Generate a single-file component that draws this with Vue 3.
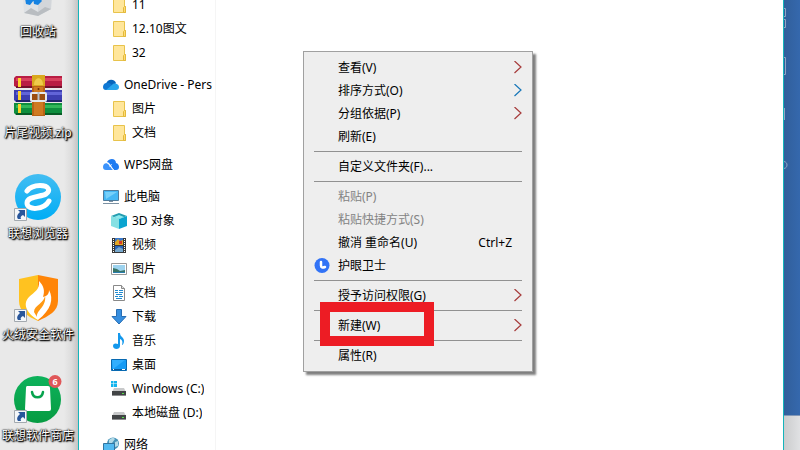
<template>
  <div class="screen">
    <aside class="desktop">
      <button v-for="item in shortcuts" :key="item.label" type="button" class="shortcut">
        <svg class="shortcut__icon" viewBox="0 0 48 48" aria-hidden="true">
          <g v-if="item.icon === 'bin'">
            <path d="M8 8L24 13L39 8L37 38L24 45L10 42z" fill="#dfe2e5" />
            <path d="M24 13L39 8L37 38L24 45z" fill="#d3d6da" />
            <path d="M10 42L17 37L24 41L31 36L37 38L24 45z" fill="#b9bdc1" />
            <path d="M11 27l5-3 4 5-4 5-4-1zM19 27l6-1 3 4-4 4-4-1z" fill="#1683e2" />
          </g>
          <g v-else-if="item.icon === 'zip'" transform="translate(0 2)">
            <path d="M2 2h46v12H4L0 12V4z" fill="#b91d43" />
            <path d="M2 4h46v3H2z" fill="#d8405e" />
            <path d="M2 12h46v2H2z" fill="#74102c" />
            <path d="M0 16h48v12H2l-2-2z" fill="#3d3eb1" />
            <path d="M2 18h46v3H2z" fill="#6264d8" />
            <path d="M2 26h46v2H2z" fill="#22236e" />
            <path d="M0 29h48v12H2l-2-2z" fill="#0e8e3e" />
            <path d="M2 31h46v3H2z" fill="#32b75a" />
            <path d="M2 39h46v2H2z" fill="#075c26" />
            <path d="M4 4h3v9H4zM4 17h3v9H4zM4 30h3v9H4z" fill="#ffd32c" />
            <path d="M18 1h13v41H18z" fill="#b96316" />
            <path d="M18 1h13v11H18z" fill="#d9a91e" />
            <path d="M20 11c0-9 9-9 9 0z" fill="#efcb4c" />
            <path d="M20 13h9v28h-9z" fill="#cf7a22" />
            <rect x="17" y="19" width="15" height="8" rx="1" fill="#9c4e10" stroke="#e6e8eb" stroke-width="2" />
            <path d="M24.500 18v8" stroke="#b9c2ca" stroke-width="2" />
            <circle cx="24.500" cy="15" r="1" fill="#653006" />
          </g>
          <g v-else-if="item.icon === 'browser'">
            <defs>
              <linearGradient id="sky" x2="0" y2="1">
                <stop stop-color="#43bdf2" /><stop offset="1" stop-color="#00adf5" />
              </linearGradient>
            </defs>
            <circle cx="24" cy="24" r="23" fill="url(#sky)" />
            <path d="M13 18C16 14 20 12.500 26 12.500C35 12.500 37 18 32 21C27 24 13 23 13 30C13 38 30 37 35 28" fill="none" stroke="#fff" stroke-width="5" stroke-linecap="round" />
          </g>
          <g v-else-if="item.icon === 'fire'">
            <path d="M5 5L24 1V47C13 42 5 37 5 27z" fill="#ffc220" />
            <path d="M24 1L44 5V27C44 37 35 42 24 47z" fill="#ff8508" />
            <path d="M25 7C30 12 31 17 29 23C33 22 35 20 35 16C40 25 37 36 24 46C11 38 9 29 15 23C20 18 26 16 25 7z" fill="#fff" />
            <path d="M31 21C31 29 20 31 20 38L23 43C22 36 33 33 31 21z" fill="#ff9914" />
          </g>
          <g v-else>
            <defs>
              <linearGradient id="leaf" x2="0" y2="1">
                <stop stop-color="#0db25b" /><stop offset="1" stop-color="#069b42" />
              </linearGradient>
            </defs>
            <circle cx="23.500" cy="24.500" r="23.500" fill="url(#leaf)" />
            <path d="M13 11h21a2 2 0 0 1 2 2l1 21a2 2 0 0 1-2 2H13a2 2 0 0 1-2-2l1-21a2 2 0 0 1 1-2z" fill="#fff" />
            <path d="M18 17c1 7 10 7 11 0" fill="none" stroke="#07a34d" stroke-width="2.500" stroke-linecap="round" />
            <circle cx="41" cy="6.500" r="6.500" fill="#e05759" />
          </g>
          <g v-if="item.linked" transform="translate(0 35)">
            <path d="M.5.5h12v12H.5z" fill="#f4f7fa" stroke="#a3a9af" />
            <path d="M4 2h7v7L9 7C7 8 6 9 7 11H4C2 8 4 6 6 4z" fill="#28569b" />
          </g>
        </svg>
        <span v-if="item.badge" class="shortcut__badge">{{ item.badge }}</span>
        <span class="shortcut__label">{{ item.label }}</span>
      </button>
    </aside>

    <section class="explorer">
      <nav class="tree">
        <ul v-for="(group, index) in tree" :key="index" class="tree__group">
          <li v-for="node in group" :key="node.label">
            <button type="button" :class="['node', { 'node--root': node.root }]">
              <svg class="node__icon" viewBox="0 0 16 16" aria-hidden="true">
                <g v-if="node.icon === 'folder'">
                  <path d="M2.500.5h11v9h1v6h-12z" fill="#ffe69b" stroke="#e8c34b" />
                  <path d="M12.500 15.500v-5l1-1h1v6z" fill="#ffdc72" stroke="#e3b93c" />
                </g>
                <g v-else-if="node.icon === 'onedrive'">
                  <path d="M3 7C4 2 11 1 13 6L9 11z" fill="#0864bb" />
                  <path d="M3 13C-1 13-1 7 3 6C6 5 8 7 10 9L5 13z" fill="#0f78d4" />
                  <path d="M3 13L9 8C11 5 16 7 16 10C16 12 15 13 13 13z" fill="#28a5ec" />
                </g>
                <g v-else-if="node.icon === 'wps'">
                  <path d="M4 5C6 1 13 1 13 6C17 7 17 13 13 13H11L6 6z" fill="#1f7cf2" />
                  <path d="M0 10C0 6 4 5 6 8L10 13H3C1 13 0 12 0 10z" fill="#3c93fb" />
                  <path d="M4.500 6C7 6 8 12 11.500 13.500M9 7.500Q7 8 6.500 9.500" fill="none" stroke="#fff" stroke-width=".8" />
                </g>
                <g v-else-if="node.icon === 'pc'">
                  <path d="M.5 1.500h15v10H.5z" fill="#45b7f4" stroke="#507b9b" />
                  <path d="M2 3h12L3 10z" fill="#77d0fa" />
                  <path d="M6 12h4v1H6zM0 14h16v1H0z" fill="#7c91a3" />
                </g>
                <g v-else-if="node.icon === 'cube'">
                  <path d="M0 3L8 0L16 3L8 6z" fill="#249db0" />
                  <path d="M0 3L8 6V16L0 13z" fill="#85e0e3" />
                  <path d="M8 6L16 3V13L8 16z" fill="#0ba4cf" />
                  <path d="M3 4L8 2L13 4L8 6z" fill="#8ce9ee" />
                </g>
                <g v-else-if="node.icon === 'film'">
                  <path d="M1 1h14v15H1z" fill="#383838" />
                  <path d="M4 1h8v7H4z" fill="#3978ca" />
                  <path d="M4 5l3-3 2 2 3-1v5H4z" fill="#e2a725" />
                  <path d="M8 4h3v3H8z" fill="#d63926" />
                  <path d="M4 9h8v6H4z" fill="#2563bc" />
                  <path d="M4 13l4-3 4 2v3H4z" fill="#77a8cd" />
                  <path d="M2.500 2v13M13.500 2v13" stroke="#fff" stroke-dasharray="1 1" />
                </g>
                <g v-else-if="node.icon === 'picture'">
                  <path d="M.5 2.500h15v11H.5z" fill="#fff" stroke="#999" />
                  <path d="M2 4h12v8H2z" fill="#9dd3ef" />
                  <path d="M2 7l4 1 3 2 5-1v3H2z" fill="#387467" />
                  <path d="M2 11h12v1H2z" fill="#297dac" />
                </g>
                <g v-else-if="node.icon === 'document'">
                  <path d="M2.500.5h8l3 3v12h-11z" fill="#fff" stroke="#898989" />
                  <path d="M10.500.5v3h3" fill="#ddd" stroke="#898989" />
                  <path d="M4 5.500h3M8 5.500h4M4 7.500h3M8 7.500h4M5 9.500h6M4 11.500h3M8 11.500h4M5 13.500h6" stroke="#218bd0" />
                </g>
                <path v-else-if="node.icon === 'download'" d="M5.500.5h5v7h4.500L8 15 1 7.500h4.500z" fill="#378fe0" stroke="#286eb4" />
                <g v-else-if="node.icon === 'music'">
                  <path d="M7 0h2c0 4 4 4 4 8 0 2-1 4-2 4 1-4 0-5-2-6v7c0 4-7 4-7 0 0-3 3-3 5-2z" fill="#1498ec" />
                </g>
                <g v-else-if="node.icon === 'screen'">
                  <path d="M.5 2.500h15v11H.5z" fill="#169bf5" stroke="#0869b1" />
                  <path d="M1 3h13L2 12z" fill="#32aefd" />
                  <path d="M1 12h14v1H1z" fill="#075b9f" />
                  <path d="M2 12.500h1M11 12.500h3" stroke="#fff" />
                </g>
                <g v-else-if="node.icon === 'disk' || node.icon === 'windisk'" transform="translate(0 1)">
                  <path v-if="node.icon === 'windisk'" d="M0 -1h2.500v2.500H0zM3 -1h3v2.500H3zM0 2h2.500v3H0zM3 2h3v3H3z" fill="#13b4ed" />
                  <path d="M3 6h10l2 4H1z" fill="#c8c9ca" />
                  <path d="M1 9h14v5H1z" fill="#424446" />
                  <path d="M1 13h14v1H1z" fill="#8d8e8f" />
                  <path d="M11 11h2v1h-2z" fill="#55e247" />
                </g>
                <g v-else>
                  <circle cx="10" cy="6.500" r="6" fill="#4794b9" />
                  <path d="M6 3c3-3 5-2 6-1L9 6 6 7zM12 5l3-1v5l-3 1z" fill="#b3dae7" />
                  <path d="M.5 6.500h11v7H.5z" fill="#52baf1" stroke="#32749f" />
                  <path d="M2 15h8v1H2z" fill="#7590a2" />
                </g>
              </svg>
              <span class="node__label">{{ node.label }}</span>
            </button>
          </li>
        </ul>
      </nav>

      <main class="files">
        <div class="menu" role="menu">
          <template v-for="(entry, index) in menu" :key="index">
            <hr v-if="entry.separator" class="menu__line" />
            <button v-else type="button" role="menuitem" class="menu__item" :disabled="entry.disabled">
              <svg v-if="entry.eye" class="menu__icon" viewBox="0 0 16 16" aria-hidden="true">
                <circle cx="8" cy="7.500" r="7.500" fill="#3273f6" />
                <path d="M7 4v3.500q0 3 4 1.500" fill="none" stroke="#fff" stroke-width="2.500" stroke-linecap="round" />
              </svg>
              <span class="menu__label">{{ entry.label }}</span>
              <span v-if="entry.hint" class="menu__hint">{{ entry.hint }}</span>
              <svg v-if="entry.arrow" class="menu__arrow" viewBox="0 0 8 14" aria-hidden="true">
                <path d="M.5 0L7 6L.5 12" fill="none" :stroke="entry.arrow" stroke-width="1.200" />
              </svg>
            </button>
          </template>
          <div class="marker"></div>
        </div>
      </main>
    </section>

    <aside class="backdrop">
      <svg class="backdrop__marks" viewBox="0 0 16 190" aria-hidden="true">
        <path d="M0 8.500h1.500v8H0M0 19.500h1.500v8H0M0 57.500h1.500v17H0M.5 108v12M0 161.500C4 162 4 168 0 168.500" fill="none" stroke="#91a7c5" />
      </svg>
      <div class="taskbar"></div>
    </aside>
  </div>
</template>

<script setup>
const shortcuts = [
  { label: '回收站', icon: 'bin' },
  { label: '片尾视频.zip', icon: 'zip' },
  { label: '联想浏览器', icon: 'browser', linked: true },
  { label: '火绒安全软件', icon: 'fire', linked: true },
  { label: '联想软件商店', icon: 'store', linked: true, badge: 6 }
];

const tree = [
  [
    { label: '11', icon: 'folder' },
    { label: '12.10图文', icon: 'folder' },
    { label: '32', icon: 'folder' }
  ],
  [
    { label: 'OneDrive - Pers', icon: 'onedrive', root: true },
    { label: '图片', icon: 'folder' },
    { label: '文档', icon: 'folder' }
  ],
  [{ label: 'WPS网盘', icon: 'wps', root: true }],
  [
    { label: '此电脑', icon: 'pc', root: true },
    { label: '3D 对象', icon: 'cube' },
    { label: '视频', icon: 'film' },
    { label: '图片', icon: 'picture' },
    { label: '文档', icon: 'document' },
    { label: '下载', icon: 'download' },
    { label: '音乐', icon: 'music' },
    { label: '桌面', icon: 'screen' },
    { label: 'Windows (C:)', icon: 'windisk' },
    { label: '本地磁盘 (D:)', icon: 'disk' }
  ],
  [{ label: '网络', icon: 'network', root: true }]
];

const menu = [
  { label: '查看(V)', arrow: '#a63a3a' },
  { label: '排序方式(O)', arrow: '#1676b8' },
  { label: '分组依据(P)', arrow: '#a63a3a' },
  { label: '刷新(E)' },
  { separator: true },
  { label: '自定义文件夹(F)...' },
  { separator: true },
  { label: '粘贴(P)', disabled: true },
  { label: '粘贴快捷方式(S)', disabled: true },
  { label: '撤消 重命名(U)', hint: 'Ctrl+Z' },
  { label: '护眼卫士', eye: true },
  { separator: true },
  { label: '授予访问权限(G)', arrow: '#a63a3a' },
  { separator: true },
  { label: '新建(W)', arrow: '#a63a3a' },
  { separator: true },
  { label: '属性(R)' }
];
</script>

<style>
body {
  margin: 0;
}
</style>

<style scoped>
.screen {
  display: flex;
  height: 100vh;
  overflow: hidden;
  background: #fff;
  color: #000;
  font-family: "Noto Sans", "Noto Sans CJK SC", sans-serif;
  font-size: 12px;
}

button {
  border: none;
  padding: 0;
  background: none;
  color: inherit;
  font: inherit;
  text-align: left;
}

/* Desktop icons */
.desktop {
  flex: none;
  width: 76px;
  padding-right: 2px;
  background: linear-gradient(90deg, #e9e9e9 82%, #dcdcdc 92%, #c4c4c4);
}

.shortcut {
  position: relative;
  display: flex;
  flex-direction: column;
  align-items: center;
  gap: 4px;
  width: 100%;
  height: 101px;
}

.shortcut:first-child {
  margin-top: -29px;
}

.shortcut__icon {
  flex: none;
  width: 48px;
  height: 48px;
}

.shortcut__label {
  color: #fff;
  line-height: 18px;
  white-space: nowrap;
  text-shadow: 1px 1px 1px #000, 0 0 1px #000, 0 0 2px #000, 1px 1px 2px #000;
}

.shortcut__badge {
  position: absolute;
  top: 0;
  left: 49px;
  width: 12px;
  color: #fff;
  font-size: 9px;
  font-weight: 700;
  line-height: 13px;
  text-align: center;
}

/* Explorer window */
.explorer {
  display: flex;
  flex: 1;
  min-width: 0;
  border: solid #14b4bb;
  border-width: 0 1px;
  background: #fff;
}

.tree {
  flex: none;
  width: 134px;
  margin-top: -7px;
  padding-right: 2px;
  border-right: 1px solid #f5f5f5;
}

.tree__group {
  margin: 0 0 8px;
  padding: 0;
  list-style: none;
}

.node {
  display: flex;
  align-items: center;
  gap: 5px;
  width: 100%;
  height: 24px;
  padding-left: 32px;
}

.node--root {
  padding-left: 24px;
}

.node__icon {
  flex: none;
  width: 16px;
  height: 16px;
}

.node__label {
  overflow: hidden;
  line-height: 20px;
  white-space: nowrap;
}

.files {
  position: relative;
  flex: 1;
  min-width: 0;
}

/* Context menu */
.menu {
  position: absolute;
  top: 51px;
  left: 87px;
  box-sizing: border-box;
  width: 230px;
  padding: 4px 10px;
  border: 1px solid #a0a0a0;
  background: #eee;
  box-shadow: 3px 3px 2px rgba(0, 0, 0, 0.5);
}

.menu__item {
  position: relative;
  display: flex;
  align-items: center;
  width: 100%;
  height: 23px;
  padding: 0 0 0 24px;
}

.menu__item:disabled {
  color: #838383;
}

.menu__label {
  flex: 1;
  line-height: 20px;
  white-space: nowrap;
}

.menu__icon {
  position: absolute;
  left: 0;
  width: 16px;
  height: 16px;
}

.menu__hint {
  margin-right: 10px;
}

.menu__arrow {
  width: 8px;
  height: 14px;
}

.menu__line {
  height: 1px;
  margin: 3px 0;
  border: none;
  background: #919191;
}

/* Frame around the "new" entry */
.marker {
  position: absolute;
  top: 250px;
  left: 16px;
  box-sizing: border-box;
  width: 114px;
  height: 44px;
  border: 10px solid #ed1c24;
  pointer-events: none;
}

/* Window behind */
.backdrop {
  display: flex;
  flex: none;
  flex-direction: column;
  justify-content: space-between;
  width: 16px;
  background: linear-gradient(90deg, #315f9b, #3568ad);
}

.backdrop__marks {
  width: 16px;
  height: 190px;
}

.taskbar {
  height: 34px;
  border-top: 1px solid #8297b6;
  background: linear-gradient(90deg, #cbcccd, #e0e1e3);
}
</style>
